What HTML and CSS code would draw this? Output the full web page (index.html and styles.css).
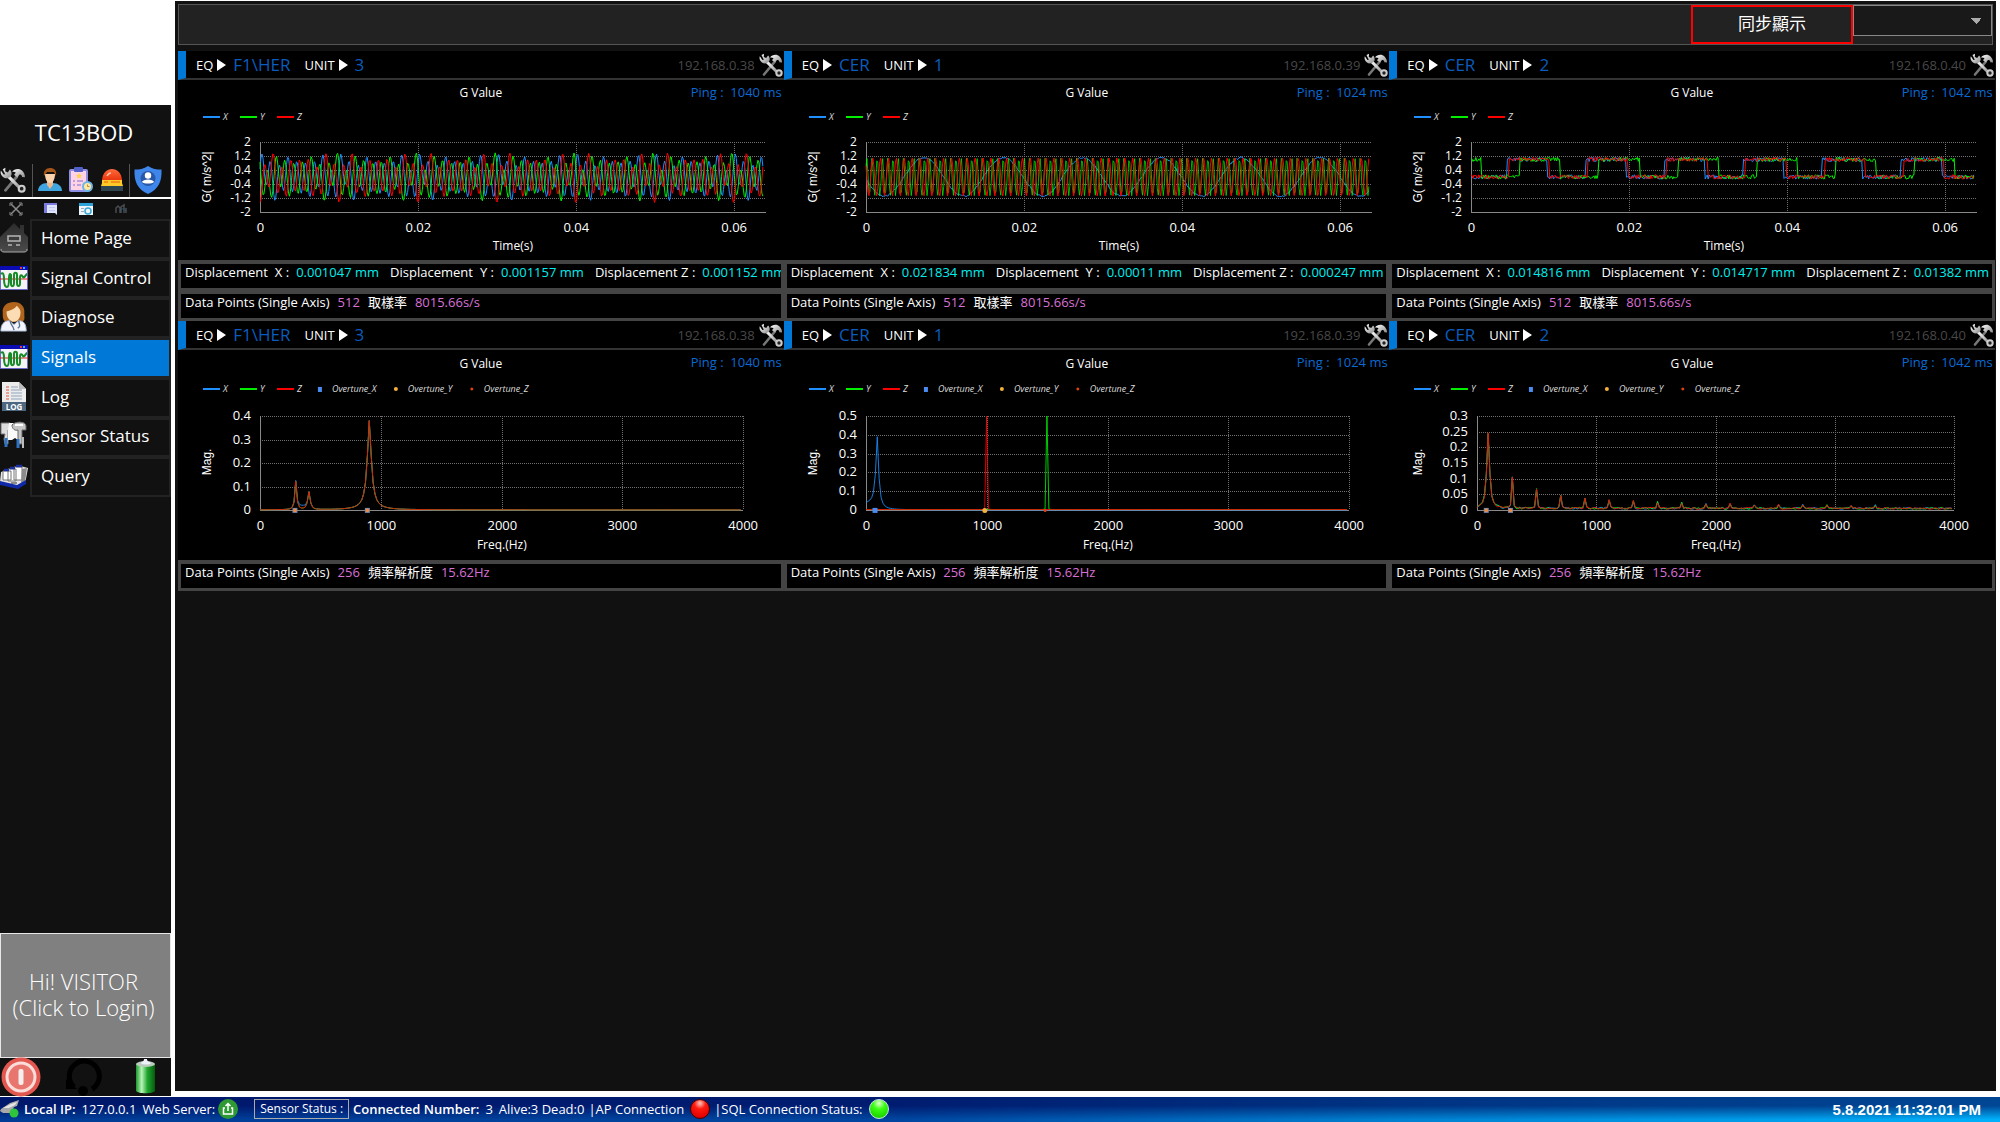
FILE: index.html
```html
<!DOCTYPE html>
<html lang="zh-Hant">
<head>
<meta charset="utf-8">
<title>TC13BOD Signals</title>
<link rel="stylesheet" href="styles.css">
</head>
<body>
<svg class="defs" aria-hidden="true">
  <defs>
    <linearGradient id="steel" x1="0" y1="0" x2="1" y2="1"><stop offset="0" stop-color="#fff"/><stop offset="1" stop-color="#8a8a8a"/></linearGradient>
    <linearGradient id="cell" x1="0" x2="1"><stop offset="0" stop-color="#1c9a2c"/><stop offset=".3" stop-color="#b8f5b8"/><stop offset=".6" stop-color="#1fa52e"/><stop offset="1" stop-color="#045c0c"/></linearGradient>
    <linearGradient id="house" x1="0" y1="0" x2="0" y2="1"><stop offset="0" stop-color="#2c2c2c"/><stop offset="1" stop-color="#4a4a4a"/></linearGradient>
    <linearGradient id="dome" x1="0" y1="0" x2="0" y2="1"><stop offset="0" stop-color="#ff6a3a"/><stop offset="1" stop-color="#e8320c"/></linearGradient>
    <radialGradient id="redball" cx=".5" cy=".2" r=".75"><stop offset="0" stop-color="#ffc8c0"/><stop offset=".4" stop-color="#ff1a10"/><stop offset="1" stop-color="#e00000"/></radialGradient>
    <radialGradient id="greenball" cx=".5" cy=".2" r=".7"><stop offset="0" stop-color="#e0ffd0"/><stop offset=".45" stop-color="#3cff14"/><stop offset="1" stop-color="#1fd800"/></radialGradient>
    <symbol id="tools" viewBox="0 0 24 24">
      <path d="M5 21.500 15.500 9" stroke="#777" stroke-width="2.600" stroke-linecap="round"/>
      <path d="M11 4.500C13 1.500 18 .8 20.500 3.500c1.800 1.800 2.700 4 2.500 6l-2.600-.3c-.2-1.700-1-2.600-2.400-2.200l-2 2.600-3-2.400 1.600-1.900c-.9-.8-2.300-.9-3.600-.8z" fill="url(#steel)"/>
      <path d="M7.500 8.500 19 20" stroke="url(#steel)" stroke-width="3"/>
      <circle cx="20" cy="20" r="2.700" fill="#222" stroke="#ccc" stroke-width="2"/>
      <path d="M5 .8 4.800 4l2.400 1 1.900-2.600c2 1.900 2.200 5 .3 6.700-2 1.900-4.800 1.700-6.700.1C.9 7.700.1 5.600.8 3.300L3.400 7l1.400-.2L2.500 2z" fill="url(#steel)"/>
    </symbol>
    <symbol id="wave" viewBox="0 0 28 24">
      <path fill="#f4f4f4" stroke="#6a6acb" d="M.5.5h27v23H.5z"/><path fill="#0b0bb4" d="M0 0h28v4H0z"/><path fill="#e33" d="M20 1h2v2h-2z"/><path fill="#4ad" d="M23 1h2v2h-2z"/>
      <path d="M0 13h28" stroke="#e02020"/>
      <path d="M1 8c2-2 3 0 3 5s1 8 3 8 2-5 2-9 1-5 2-3v9c0 3 3 3 3-1V9c0-3 3-3 3 0v8c0 4 3 4 3 0v-5c0-4 2-3 3-1s3-3 4-3" fill="none" stroke="#158a26" stroke-width="2"/>
    </symbol>
  </defs>
</svg>
<div class="app">
  <div class="body">
    <aside class="sidebar">
      <div class="logo"></div>
      <div class="side">
        <h1 class="station">TC13BOD</h1>
        <div class="quick">
          <div class="quick-cell tools-cell"><svg class="i26"><use href="#tools"/></svg></div>
          <div class="quick-cell trio">
            <svg class="i24" viewBox="0 0 24 24"><path d="M0 23c0-5 4-8 9-8h6c5 0 9 3 9 8z" fill="#41a5e0"/><path d="M9 12h6v5l-3 4-3-4z" fill="#eab88a"/><path d="M7 6h10c0 5-2 9-5 9S7 11 7 6z" fill="#fbd3ac"/><path d="M6 8C5 3 8 0 12 0s7 2 6 8l-2-4H9z" fill="#a5561a"/></svg>
            <svg class="i26" viewBox="0 0 26 26"><rect x="1" y="2" width="19" height="23" rx="2" fill="#8f8fe6"/><path fill="#ffd3e3" d="M3 4h15v19H3z"/><rect x="6" y="0" width="9" height="5" rx="1" fill="#5161c9"/><path d="m11 6 1 2h2l-1.500 1.500.5 2-2-1-2 1 .5-2L8 8h2z" fill="#ffd24a"/><path d="M5 14h2m2 0h6M5 18h2m2 0h4" stroke="#a88fe0" stroke-width="1.500"/><circle cx="19.500" cy="19.500" r="5.500" fill="#6fb5e8"/><circle cx="19.500" cy="19.500" r="3.500" fill="#ffe9a0"/><path d="M19.500 17.500v2h2" fill="none" stroke="#c08a40"/></svg>
            <svg class="i24" viewBox="0 0 24 24"><path d="M2 13C2 5 7 1 12 1s10 4 10 12z" fill="url(#dome)"/><path d="M7 8c1-2 2-3 4-3" fill="none" stroke="#ffc0a0" stroke-width="1.500"/><path fill="#ffc928" d="M2 12h20v3l1 3H1l1-3z"/><path d="M4 14h4m3 0h9" stroke="#f08010" stroke-width="1.500"/><path fill="#2f4650" d="M1 18h22v5H1z"/></svg>
          </div>
          <div class="quick-cell shield-cell"><svg class="i28" viewBox="0 0 28 28"><path d="M14 0c4 3 9 3.500 13.500 3.500C28 15 25 23 14 28 3 23 0 15 .5 3.500 5 3.500 10 3 14 0z" fill="#3f86ea"/><circle cx="14" cy="12.500" r="7.500" fill="#2858a8"/><circle cx="14" cy="9.500" r="3.200" fill="#fff"/><path d="M8 16c1-3.500 11-3.500 12 0-2 2-10 2-12 0z" fill="#fff"/></svg></div>
        </div>
        <div class="mini">
          <svg class="i14" viewBox="0 0 14 14"><path d="M2 2l10 10M12 2 2 12" stroke="#8a8a8a" stroke-width="1.500"/><path d="M1 4V1h3M10 1h3v3M13 10v3h-3M4 13H1v-3" fill="none" stroke="#8a8a8a"/></svg>
          <svg class="i14" viewBox="0 0 14 14"><path fill="#7b7be0" d="M0 1h13v10H0z"/><path fill="#dfe4ff" d="M3 3h10v10l-2-2H3z"/><path stroke="#c0c8f4" d="M5 5.500h6M5 8.500h6"/></svg>
          <svg class="i14" viewBox="0 0 14 14"><path fill="#eef6fb" d="M0 1h14v12H0z"/><path fill="#2ba3d8" d="M0 1h14v3H0z"/><circle cx="9" cy="9" r="3" fill="none" stroke="#3aa7d6" stroke-width="1.500"/><path fill="#9ab" d="M2 6h3v1H2zM2 9h3v1H2z"/></svg>
          <svg class="i14" viewBox="0 0 14 14"><path d="M2 11V6l2-2 2 2v5M7 11V5l3-2v8m2 0V6" fill="none" stroke="#484c50" stroke-width="1.500"/><path d="M6 9c2-3 4-3 6 0" stroke="#2d5670" fill="none"/></svg>
        </div>
        <nav class="menu">
          <div class="menu-icons">
            <svg class="menu-icon" viewBox="0 0 28 30"><path d="M0 14 14 0l6 6V2h4v8l4 4v12c0 2-1 3-3 3H3c-2 0-3-1-3-3z" fill="url(#house)"/><path d="M1 26c0 2 1 3 3 3h20c2 0 3-1 3-3" fill="none" stroke="#aaa"/><path d="M8 13h12v5H8zM8 22h4m4 0h4" fill="none" stroke="#b5b5b5" stroke-width="1.500"/></svg>
            <svg class="menu-icon" viewBox="0 0 28 24"><use href="#wave"/></svg>
            <svg class="menu-icon" viewBox="0 0 28 32"><path d="M2 12C1 4 7 0 14 0s12 5 11 12c0 5 1 7-2 9H5c-3-2-3-5-3-9z" fill="#b0641c"/><path d="M6 10c5-1 9-3 11-6 2 2 4 4 4 7 0 6-3 10-7 10s-8-4-8-11z" fill="#fbdcb4"/><path d="M0 31c0-7 3-11 9-11l5 4 5-4c6 0 8 4 8 11z" fill="#f2f6fc" stroke="#a9b9d6"/><path d="M10 20c0 5 3 4 4 10m5-10c1 5 2 6-1 8" fill="none" stroke="#5f7396" stroke-width="1.500"/></svg>
            <svg class="menu-icon" viewBox="0 0 28 24"><use href="#wave"/></svg>
            <svg class="menu-icon" viewBox="0 0 28 30"><path d="M2 0h17l7 7v22H2z" fill="#ececec"/><path d="m19 0 7 7h-7z" fill="#bcbcbc"/><path d="M6 5h3M6 8h3M6 11h3M6 14h3M6 17h3" stroke="#e5533f"/><path d="M11 5h7M11 8h11M11 11h11M11 14h11M11 17h11" stroke="#8fa5bd"/><path fill="#4d6780" d="M2 20h24v9H2z"/><text x="14" y="28" text-anchor="middle" class="log-text">LOG</text></svg>
            <svg class="menu-icon" viewBox="0 0 28 30"><path d="M1 2h9v7H8v14H5l-1-5 1-5H1z" fill="#ddd" stroke="#777"/><path d="M9 2h9v17l-3-2-3 2H8V9z" fill="#fafafa"/><path d="M12 4c3-4 14-4 14 1v4h-4v14h-4V9c-3 1-6-1-6-5z" fill="#c4c4c4" stroke="#666"/><path d="M15 4h8" stroke="#fff" stroke-width="2"/><path d="M6 17v9m12-8v9" stroke="#2d72c4" stroke-width="3"/><path d="M23 16v11" stroke="#bbb" stroke-width="2"/></svg>
            <svg class="menu-icon" viewBox="0 0 28 26"><path d="M1 9 20 3l8 2-3 16-7 3L0 19z" fill="#e4e4e4"/><path d="M3 8h8v9H3zM8 6h8v12H8zM14 4h8v13h-8z" fill="#fff" stroke="#777"/><path d="M4 7h5m1-2h5m1-2h6" stroke="#1c2f9f" stroke-width="2.500"/><path d="m22 6 5-1-2 14-4 2z" fill="#8b8b8b"/><path d="M11 20h6" stroke="#333"/><path d="m0 18 17 4 9-5v4l-8 5-18-4z" fill="#1029a8"/></svg>
          </div>
          <div class="menu-items">
            <button class="menu-item">Home Page</button>
            <button class="menu-item">Signal Control</button>
            <button class="menu-item">Diagnose</button>
            <button class="menu-item active">Signals</button>
            <button class="menu-item">Log</button>
            <button class="menu-item">Sensor Status</button>
            <button class="menu-item">Query</button>
          </div>
        </nav>
        <button class="login">Hi! VISITOR<br>(Click to Login)</button>
        <div class="power">
          <svg class="i40" viewBox="0 0 40 40"><circle cx="20" cy="20" r="19.500" fill="#e2574f"/><circle cx="20" cy="20" r="14" fill="#e8766f" stroke="#fbdcd9" stroke-width="3"/><rect x="17.500" y="12" width="5" height="16" rx="2" fill="#f3efee"/></svg>
          <svg class="i40" viewBox="0 0 40 40"><path d="M11 30A15 15 0 1 1 29 32" fill="none" stroke="#000" stroke-width="5"/><path d="M3 32V22l11 10z"/><circle cx="20" cy="34" r="5"/></svg>
          <svg class="i40" viewBox="0 0 40 40"><path d="M11 7v27c2 3 17 3 19 0V7z" fill="url(#cell)"/><ellipse cx="20.500" cy="7" rx="9.500" ry="3" fill="#b9cbbd"/><path d="M16 6c1-2 3-1 3-4h3c0 3 2 2 4 4-1 2-9 2-10 0z" fill="#eef0fa"/></svg>
        </div>
      </div>
    </aside>
    <main class="main">
      <div class="toolbar">
        <button class="sync">同步顯示</button>
        <select class="picker" aria-label="群組"><option></option></select>
      </div>
      <div class="grid">
        <section class="panel">
          <header class="head"><span>EQ</span><i class="tri"></i><b class="val">F1\HER</b><span class="unit">UNIT</span><i class="tri"></i><b class="val">3</b><span class="ip">192.168.0.38</span><svg class="i24"><use href="#tools"/></svg></header>
          <svg class="chart" viewBox="0 0 606 180" data-kind="time" data-set="0" data-ping="1040"></svg>
          <div class="info"><p class="row disp"><span>Displacement</span><span>X :</span><em class="cyan">0.001047 mm</em><span>Displacement</span><span>Y :</span><em class="cyan">0.001157 mm</em><span>Displacement Z :</span><em class="cyan">0.001152 mm</em></p>
          <p class="row"><span>Data Points (Single Axis)</span><em class="pink">512</em><span>取樣率</span><em class="pink">8015.66s/s</em></p></div>
        </section>
        <section class="panel">
          <header class="head"><span>EQ</span><i class="tri"></i><b class="val">CER</b><span class="unit">UNIT</span><i class="tri"></i><b class="val">1</b><span class="ip">192.168.0.39</span><svg class="i24"><use href="#tools"/></svg></header>
          <svg class="chart" viewBox="0 0 606 180" data-kind="time" data-set="1" data-ping="1024"></svg>
          <div class="info"><p class="row disp"><span>Displacement</span><span>X :</span><em class="cyan">0.021834 mm</em><span>Displacement</span><span>Y :</span><em class="cyan">0.00011 mm</em><span>Displacement Z :</span><em class="cyan">0.000247 mm</em></p>
          <p class="row"><span>Data Points (Single Axis)</span><em class="pink">512</em><span>取樣率</span><em class="pink">8015.66s/s</em></p></div>
        </section>
        <section class="panel">
          <header class="head"><span>EQ</span><i class="tri"></i><b class="val">CER</b><span class="unit">UNIT</span><i class="tri"></i><b class="val">2</b><span class="ip">192.168.0.40</span><svg class="i24"><use href="#tools"/></svg></header>
          <svg class="chart" viewBox="0 0 606 180" data-kind="time" data-set="2" data-ping="1042"></svg>
          <div class="info"><p class="row disp"><span>Displacement</span><span>X :</span><em class="cyan">0.014816 mm</em><span>Displacement</span><span>Y :</span><em class="cyan">0.014717 mm</em><span>Displacement Z :</span><em class="cyan">0.01382 mm</em></p>
          <p class="row"><span>Data Points (Single Axis)</span><em class="pink">512</em><span>取樣率</span><em class="pink">8015.66s/s</em></p></div>
        </section>
        <section class="panel">
          <header class="head"><span>EQ</span><i class="tri"></i><b class="val">F1\HER</b><span class="unit">UNIT</span><i class="tri"></i><b class="val">3</b><span class="ip">192.168.0.38</span><svg class="i24"><use href="#tools"/></svg></header>
          <svg class="chart" viewBox="0 0 606 210" data-kind="freq" data-set="0" data-ping="1040"></svg>
          <div class="info"><p class="row"><span>Data Points (Single Axis)</span><em class="pink">256</em><span>頻率解析度</span><em class="pink">15.62Hz</em></p></div>
        </section>
        <section class="panel">
          <header class="head"><span>EQ</span><i class="tri"></i><b class="val">CER</b><span class="unit">UNIT</span><i class="tri"></i><b class="val">1</b><span class="ip">192.168.0.39</span><svg class="i24"><use href="#tools"/></svg></header>
          <svg class="chart" viewBox="0 0 606 210" data-kind="freq" data-set="1" data-ping="1024"></svg>
          <div class="info"><p class="row"><span>Data Points (Single Axis)</span><em class="pink">256</em><span>頻率解析度</span><em class="pink">15.62Hz</em></p></div>
        </section>
        <section class="panel">
          <header class="head"><span>EQ</span><i class="tri"></i><b class="val">CER</b><span class="unit">UNIT</span><i class="tri"></i><b class="val">2</b><span class="ip">192.168.0.40</span><svg class="i24"><use href="#tools"/></svg></header>
          <svg class="chart" viewBox="0 0 606 210" data-kind="freq" data-set="2" data-ping="1042"></svg>
          <div class="info"><p class="row"><span>Data Points (Single Axis)</span><em class="pink">256</em><span>頻率解析度</span><em class="pink">15.62Hz</em></p></div>
        </section>
      </div>
    </main>
  </div>
  <footer class="status">
    <svg class="i20" viewBox="0 0 20 20"><path d="M1 10 10 4l9-3-2 6-3 1-3 6-8 0-3-2z" fill="#a9a9a9"/><path d="M3 9l8-4 6-2-2 3-6 3z" fill="#e6e6e6"/><circle cx="14" cy="14" r="4.500" fill="#2fc43c"/></svg>
    <span class="strong local">Local IP:</span><span class="ip-local">127.0.0.1</span><span class="web">Web Server:</span>
    <svg class="i20 led" viewBox="0 0 20 20"><circle cx="10" cy="10" r="10" fill="#2f9a33"/><path d="M7 9H5.500v6h9V9H13M10 12V4.500M7.500 7 10 4.500 12.500 7" fill="none" stroke="#fff" stroke-width="1.500"/></svg>
    <span class="sensor">Sensor Status :</span>
    <span class="strong">Connected Number:</span><span class="num">3</span><span class="alive">Alive:3 Dead:0</span>
    <span class="bar">|</span><span>AP Connection</span>
    <svg class="i20 ball" viewBox="0 0 20 20"><circle cx="10" cy="10" r="9.500" fill="url(#redball)" stroke="#400" stroke-width="1"/></svg>
    <span class="bar">|</span><span>SQL Connection Status:</span>
    <svg class="i20 ball" viewBox="0 0 20 20"><circle cx="10" cy="10" r="9.500" fill="url(#greenball)" stroke="#cde" stroke-width="1"/></svg>
    <time class="clock">5.8.2021 11:32:01 PM</time>
  </footer>
</div>
<script src="charts.js"></script>
</body>
</html>
```
FILE: styles.css
```css
* { box-sizing: border-box; }
html, body { height: 100%; }
body { margin: 0; background: #fff; color: #fff; font: 13px/20px "Open Sans", "Noto Sans CJK TC", sans-serif; }
button, select { font: inherit; color: inherit; margin: 0; border-radius: 0; }
svg { display: block; flex: none; }
.defs { position: absolute; width: 0; height: 0; }
.app { display: flex; flex-direction: column; min-height: 100vh; }
.body { display: flex; flex: 1; padding-bottom: 1px; }

.sidebar { display: flex; flex-direction: column; width: 171px; flex: none; }
.logo { height: 105px; background: #fff; }
.side { display: flex; flex-direction: column; flex: 1; background: #111; }
.station { margin: 0; padding: 13px 3px 0 0; font-size: 22px; font-weight: 400; line-height: 28px; height: 59px; text-align: center; }
.quick { display: flex; height: 35px; border-bottom: 2px solid #fff; }
.quick-cell { display: flex; align-items: center; padding-bottom: 2px; }
.tools-cell { width: 33px; border-right: 1px solid #555; }
.trio { width: 97px; padding-left: 5px; gap: 6px; border-right: 1px solid #555; }
.shield-cell { padding-left: 4px; }
.i14 { width: 14px; height: 14px; }
.i20 { width: 20px; height: 20px; }
.i24 { width: 24px; height: 24px; }
.i26 { width: 26px; height: 26px; }
.i28 { width: 28px; height: 28px; }
.i40 { width: 40px; height: 40px; }
.mini { display: flex; align-items: center; gap: 21px; padding-left: 9px; height: 20px; }
.menu { display: flex; height: 278px; }
.menu-icons { display: flex; flex-direction: column; justify-content: space-between; width: 30px; padding: 4px 0 6px; }
.menu-icon { width: 28px; height: 30px; }
.log-text { font: bold 8px "Open Sans", sans-serif; fill: #fff; }
.menu-items { display: flex; flex-direction: column; gap: 4px; flex: 1; padding: 2px; background: #222; }
.menu-item { flex: 1; padding: 0 0 2px 9px; border: 0; background: #111; font-size: 17px; text-align: left; }
.menu-item.active { background: #0078d7; }
.login { height: 125px; margin-top: auto; border: 1px solid #e8e8e8; background: #808080; font-size: 22px; line-height: 26px; font-weight: 300; padding: 0 4px 3px 0; }
.power { display: flex; height: 38px; align-items: center; justify-content: space-between; padding: 0 6px 0 1px; }

.main { flex: 1; min-width: 0; margin: 1px 4px 5px; padding: 3px 1px 0 3px; background: #111; }
.toolbar { display: flex; justify-content: flex-end; align-items: flex-start; height: 41px; margin-right: 2px; border: 1px solid #555; background: #222; }
.sync { width: 162px; height: 39px; padding: 0 0 2px; border: 2px solid #f00; background: #222; font-size: 17px; }
.picker { width: 139px; height: 31px; border: 1px solid #888; appearance: none; background: conic-gradient(from -45deg at 50% 100%, #aaa 90deg, transparent 0) right 9px center / 12px 6px no-repeat #191919; transform: rotate(0); }
.grid { display: grid; grid-template-columns: repeat(3, minmax(0, 1fr)); margin-top: 6px; }
.panel { min-width: 0; background: #000; }
.head { display: flex; align-items: center; height: 29px; padding: 1px 1px 0 10px; border-left: 8px solid #0078d7; border-bottom: 2px solid #333; }
.tri { margin: 0 7px 0 4px; border: solid transparent; border-width: 6px 0 6px 9px; border-left-color: #fff; }
.val { font-weight: 400; font-size: 17px; color: #0a5cbe; }
.unit { margin-left: 14px; }
.ip { margin-left: auto; margin-right: 4px; color: #484848; }
.chart { width: 100%; height: auto; }
.info { display: grid; gap: 6px; padding: 4px 3px 3px; background: #444; }
.row { display: flex; gap: 8px; height: 24px; margin: 0; padding-left: 4px; background: #000; overflow: hidden; white-space: nowrap; line-height: 17px; }
.row em { font-style: normal; }
.disp { gap: 7px; }
.disp .cyan { margin-right: 4px; }
.cyan { color: #00eeee; }
.pink { color: #da70d6; }

.chart text { fill: #fff; font-size: 12px; white-space: pre; }
.chart .tick { font-size: 13px; }
.chart .tick-small { font-size: 12px; }
.chart .key { font-size: 9px; font-style: italic; fill: #ddd; }
.chart .axis-name { font: 12px "Liberation Sans", sans-serif; }
.chart .ping { fill: #0a6ad4; font-size: 13px; }
.gridline { stroke: #707070; stroke-dasharray: 1 1; shape-rendering: crispEdges; }
.axis { stroke: #888; fill: none; shape-rendering: crispEdges; }
.trace { fill: none; stroke-width: 1; }
.x { stroke: #1e90ff; }
.y { stroke: #00f000; }
.z { stroke: #ff0000; }
.legend-line { stroke-width: 2; }

.status { display: flex; align-items: center; height: 25px; padding-bottom: 1px; background: linear-gradient(rgba(0,0,80,.6), rgba(0,0,80,.6) 35%, rgba(0,0,80,0) 90%), linear-gradient(90deg, #003c96, #0046a0 45%, #0080d0 70%, #00b0fa); white-space: nowrap; }
.strong { font-weight: 600; }
.local { margin-left: 4px; }
.ip-local { margin-left: 6px; }
.web { margin-left: 6px; }
.led { margin-left: 3px; }
.sensor { margin: 0 4px 0 16px; padding: 0 5px; font-size: 12px; line-height: 18px; border: 1px solid #aaa; }
.num { margin: 0 6px; }
.bar { margin: 0 0 0 4px; }
.ball { margin: 0 0 0 6px; }
.clock { margin-left: auto; margin-right: 19px; font: bold 15px "Liberation Sans", sans-serif; }
```
FILE: charts.js
```js
const NS = 'http://www.w3.org/2000/svg';
let seed = 7;
const noise = () => { seed = (seed * 16807) % 2147483647; return seed / 2147483647 - 0.5; };
const add = (svg, tag, cls, attrs, text) => {
  const el = document.createElementNS(NS, tag);
  if (cls) el.setAttribute('class', cls);
  for (const k in attrs) el.setAttribute(k, attrs[k]);
  if (text !== undefined) el.textContent = text;
  svg.appendChild(el);
};
const wave = (f, t, p) => Math.sin(2 * Math.PI * (f * t + p));
const square = (t, rise) => { const p = (((t - rise) / 0.01) % 1 + 1) % 1; return (p < 0.515 ? 1 : 0) + noise() * 0.25; };
const peak = (f, f0, a, w, e) => a / (1 + Math.pow(Math.abs(f - f0) / w, e));
const mix = (t, p) => 0.92 * wave(900, t, p) + 0.3 * wave(300, t, p) + 0.24 * wave(400, t, p);
const three = f => peak(f, 297, 0.12, 9, 2) + peak(f, 406, 0.075, 12, 2) + peak(f, 906, 0.38, 20, 1.8);
const odd = f => { let v = peak(f, 94, 0.24, 14, 2); for (let k = 3; k < 34; k += 2) v += peak(f, Math.round(k * 101.5 / 15.62) * 15.62, 0.3 / k, 7, 3); return v + 0.005 + noise() * 0.006; };

const signals = [
  { x: t => mix(t, 0.05), y: t => mix(t, 0.4), z: t => mix(t, 0.73) },
  { x: t => -1.1 * wave(99.5, t, 0.02) + noise() * 0.1, y: t => 1.08 * wave(1503, t, 0.1), z: t => 1.08 * wave(1001, t, 0.4) },
  { x: t => square(t, 0.0045), y: t => square(t, 0.0062), z: t => square(t, 0.0048) }
];
const spectra = [
  { top: 0.4, step: 0.1, left: 82, marks: [290, 890], x: f => three(f) + peak(f, 345, 0.012, 40, 4), y: three, z: three },
  { top: 0.5, step: 0.1, left: 82, marks: [], x: f => peak(f, 94, 0.39, 13, 1.8) + (f < 80 ? 0.03 : 0), y: f => peak(f, 1500, 0.55, 3, 3) + 0.002, z: f => peak(f, 1000, 0.55, 3, 3) + 0.002 },
  { top: 0.3, step: 0.05, left: 88, marks: [78, 281], x: odd, y: odd, z: odd }
];

document.querySelectorAll('.chart').forEach(svg => {
  const time = svg.dataset.kind === 'time', id = +svg.dataset.set;
  const s = time ? signals[id] : spectra[id];
  const left = time ? 82 : s.left, right = time ? 588 : 565;
  const top = time ? 62 : 66, bottom = time ? 132 : 160;
  const lo = time ? -2 : 0, hi = time ? 2 : s.top, step = time ? 0.8 : s.step;
  const xMax = time ? 0.0641 : 4000, xStep = time ? 0.02 : 1000;
  const px = v => left + (right - left) * v / xMax;
  const py = v => bottom - (bottom - top) * (v - lo) / (hi - lo);
  const keyY = time ? 37 : 39, mid = Math.round((left + right) / 2);

  add(svg, 'text', '', { x: 303, y: time ? 17 : 18, 'text-anchor': 'middle' }, 'G Value');
  add(svg, 'text', 'ping', { x: 604, y: 17, 'text-anchor': 'end' }, 'Ping :  ' + svg.dataset.ping + ' ms');
  ['x', 'y', 'z'].forEach((k, i) => {
    const x = 25 + i * 37;
    add(svg, 'path', 'legend-line ' + k, { d: `M${x} ${keyY}h17` });
    add(svg, 'text', 'key', { x: x + 20, y: keyY + 3 }, k.toUpperCase());
  });
  for (let i = 0; !(hi - i * step < lo - 0.001); i++) {
    const v = hi - i * step, y = Math.round(py(v)) + 0.5;
    if (v > lo + 0.001) add(svg, 'path', 'gridline', { d: `M${left} ${y}H${right}` });
    add(svg, 'text', time ? 'tick-small' : 'tick', { x: left - 9, y: y + 4, 'text-anchor': 'end' }, String(+v.toFixed(2)));
  }
  for (let v = 0; v <= xMax; v += xStep) {
    const x = Math.round(px(v)) + 0.5;
    if (v) add(svg, 'path', 'gridline', { d: `M${x} ${top}V${bottom}` });
    add(svg, 'text', 'tick', { x, y: bottom + 20, 'text-anchor': 'middle' }, String(+v.toFixed(2)));
  }
  add(svg, 'path', 'axis', { d: `M${left}.5 ${top}V${bottom}.5H${right}` });
  add(svg, 'text', '', { x: mid, y: bottom + (time ? 38 : 39), 'text-anchor': 'middle' }, time ? 'Time(s)' : 'Freq.(Hz)');
  const cy = time ? 97 : 112;
  add(svg, 'text', 'axis-name', { x: 33, y: cy, 'text-anchor': 'middle', transform: `rotate(-90 33 ${cy})` }, time ? 'G( m/s^2|' : 'Mag.');

  const count = time ? 512 : 256, dx = time ? 1 / 8015.66 : 15.62;
  ['x', 'y', 'z'].forEach(k => {
    let d = '';
    for (let i = 0; i < count; i++) d += (i ? 'L' : 'M') + px(i * dx).toFixed(1) + ' ' + py(Math.min(hi, s[k](i * dx))).toFixed(1);
    const opacity = !time ? 0.85 : id === 1 && k === 'y' ? 0.75 : 1;
    add(svg, 'path', 'trace ' + k, { d, 'stroke-opacity': opacity });
  });
  if (!time) {
    ['X', 'Y', 'Z'].forEach((k, i) => {
      const x = 142 + i * 76;
      if (i === 0) add(svg, 'rect', '', { x: x - 2, y: keyY - 2, width: 4, height: 5, fill: '#4a8cf0' });
      else add(svg, 'circle', '', { cx: x, cy: keyY, r: i === 1 ? 2 : 1.5, fill: i === 1 ? '#f5b03c' : '#e0440e' });
      add(svg, 'text', 'key', { x: x + 12, y: keyY + 3 }, 'Overtune_' + k);
    });
    s.marks.forEach(f => {
      add(svg, 'rect', '', { x: px(f) - 2.5, y: 158, width: 5, height: 5, fill: '#6c86b8' });
      add(svg, 'circle', '', { cx: px(f), cy: 160.5, r: 1.8, fill: '#f08a3c' });
    });
    if (id === 1) {
      add(svg, 'rect', '', { x: px(75) - 2.5, y: 158, width: 5, height: 5, fill: '#4a8cf0' });
      add(svg, 'circle', '', { cx: px(985), cy: 160.5, r: 2.5, fill: '#f5b03c' });
      add(svg, 'circle', '', { cx: px(1485), cy: 160.5, r: 1.5, fill: '#e0440e' });
    }
  }
});
```
